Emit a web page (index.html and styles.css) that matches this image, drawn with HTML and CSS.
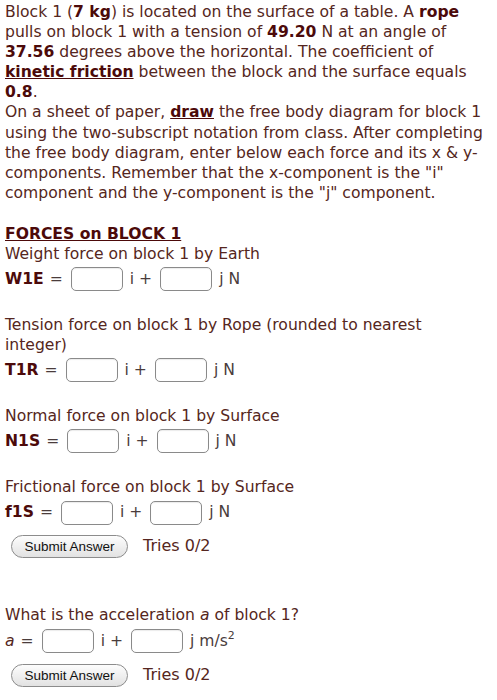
FILE: index.html
```html
<!DOCTYPE html>
<html>
<head>
<meta charset="utf-8">
<link rel="stylesheet" href="styles.css">
</head>
<body>
<div class="page">
<p class="intro">Block 1 (<b>7 kg</b>) is located on the surface of a table. A <b>rope</b> pulls on block 1 with a tension of <b>49.20</b> N at an angle of <b>37.56</b> degrees above the horizontal. The coefficient of <b><u>kinetic friction</u></b> between the block and the surface equals <b>0.8</b>.<br>On a sheet of paper, <b><u>draw</u></b> the free body diagram for block 1 using the two-subscript notation from class. After completing the free body diagram, enter below each force and its x &amp; y-components. Remember that the x-component is the "i" component and the y-component is the "j" component.</p>

<div class="section">
<div class="heading"><b><u>FORCES on BLOCK 1</u></b></div>
<div class="label">Weight force on block 1 by Earth</div>
<div class="row"><b class="var">W1E</b><span class="op">=</span><span class="box"></span><span class="op">i +</span><span class="box"></span><span class="op">j N</span></div>
</div>

<div class="section">
<div class="label">Tension force on block 1 by Rope (rounded to nearest integer)</div>
<div class="row"><b class="var">T1R</b><span class="op">=</span><span class="box"></span><span class="op">i +</span><span class="box"></span><span class="op">j N</span></div>
</div>

<div class="section">
<div class="label">Normal force on block 1 by Surface</div>
<div class="row"><b class="var">N1S</b><span class="op">=</span><span class="box"></span><span class="op">i +</span><span class="box"></span><span class="op">j N</span></div>
</div>

<div class="section">
<div class="label">Frictional force on block 1 by Surface</div>
<div class="row"><b class="var">f1S</b><span class="op">=</span><span class="box"></span><span class="op">i +</span><span class="box"></span><span class="op">j N</span></div>
<div class="submit"><button class="btn">Submit Answer</button><span class="tries">Tries 0/2</span></div>
</div>

<div class="section last">
<div class="label">What is the acceleration <i>a</i> of block 1?</div>
<div class="row arow"><i class="avar">a</i><span class="op">=</span><span class="box"></span><span class="op">i +</span><span class="box"></span><span class="op">j m/s<sup>2</sup></span></div>
<div class="submit"><button class="btn">Submit Answer</button><span class="tries">Tries 0/2</span></div>
</div>
</div>
</body>
</html>
```

FILE: styles.css
```css
html, body {
  margin: 0;
  padding: 0;
  background: #ffffff;
}
.page {
  padding: 2px 11px 0 5px;
  font-family: "DejaVu Sans", Verdana, sans-serif;
  font-size: 15.6px;
  line-height: 20.1px;
  color: #552620;
}
b {
  color: #4c0a0a;
}
.intro {
  margin: 0;
}
.section {
  margin-top: 21px;
}
.section.last {
  margin-top: 45px;
}
.row {
  display: flex;
  align-items: center;
  height: 30px;
  color: #4a3c3c;
}
.arow {
  margin-top: 1.5px;
}
.var {
  margin-right: 6px;
}
.avar {
  color: #552620;
  margin-right: 6px;
}
.op {
  margin-right: 8px;
}
.box {
  display: inline-block;
  width: 50px;
  height: 22px;
  border: 1px solid #8a8a8a;
  border-radius: 5px;
  margin-right: 7px;
  background: #fff;
  box-shadow: inset 0 1px 1px rgba(0,0,0,0.08);
}
sup {
  font-size: 11px;
  line-height: 0;
  vertical-align: 7px;
}
.submit {
  display: flex;
  align-items: center;
  margin-top: 6px;
  padding-left: 6px;
  height: 26px;
}
.btn {
  font-family: "Liberation Sans", Arial, sans-serif;
  font-size: 13.5px;
  color: #111;
  height: 23px;
  width: 117px;
  padding: 0;
  border: 1px solid #8c8c8c;
  border-radius: 12px;
  background: linear-gradient(#fdfdfd, #e2e2e2);
  margin-right: 15px;
}
.tries {
  font-size: 16px;
  color: #552620;
}
```
